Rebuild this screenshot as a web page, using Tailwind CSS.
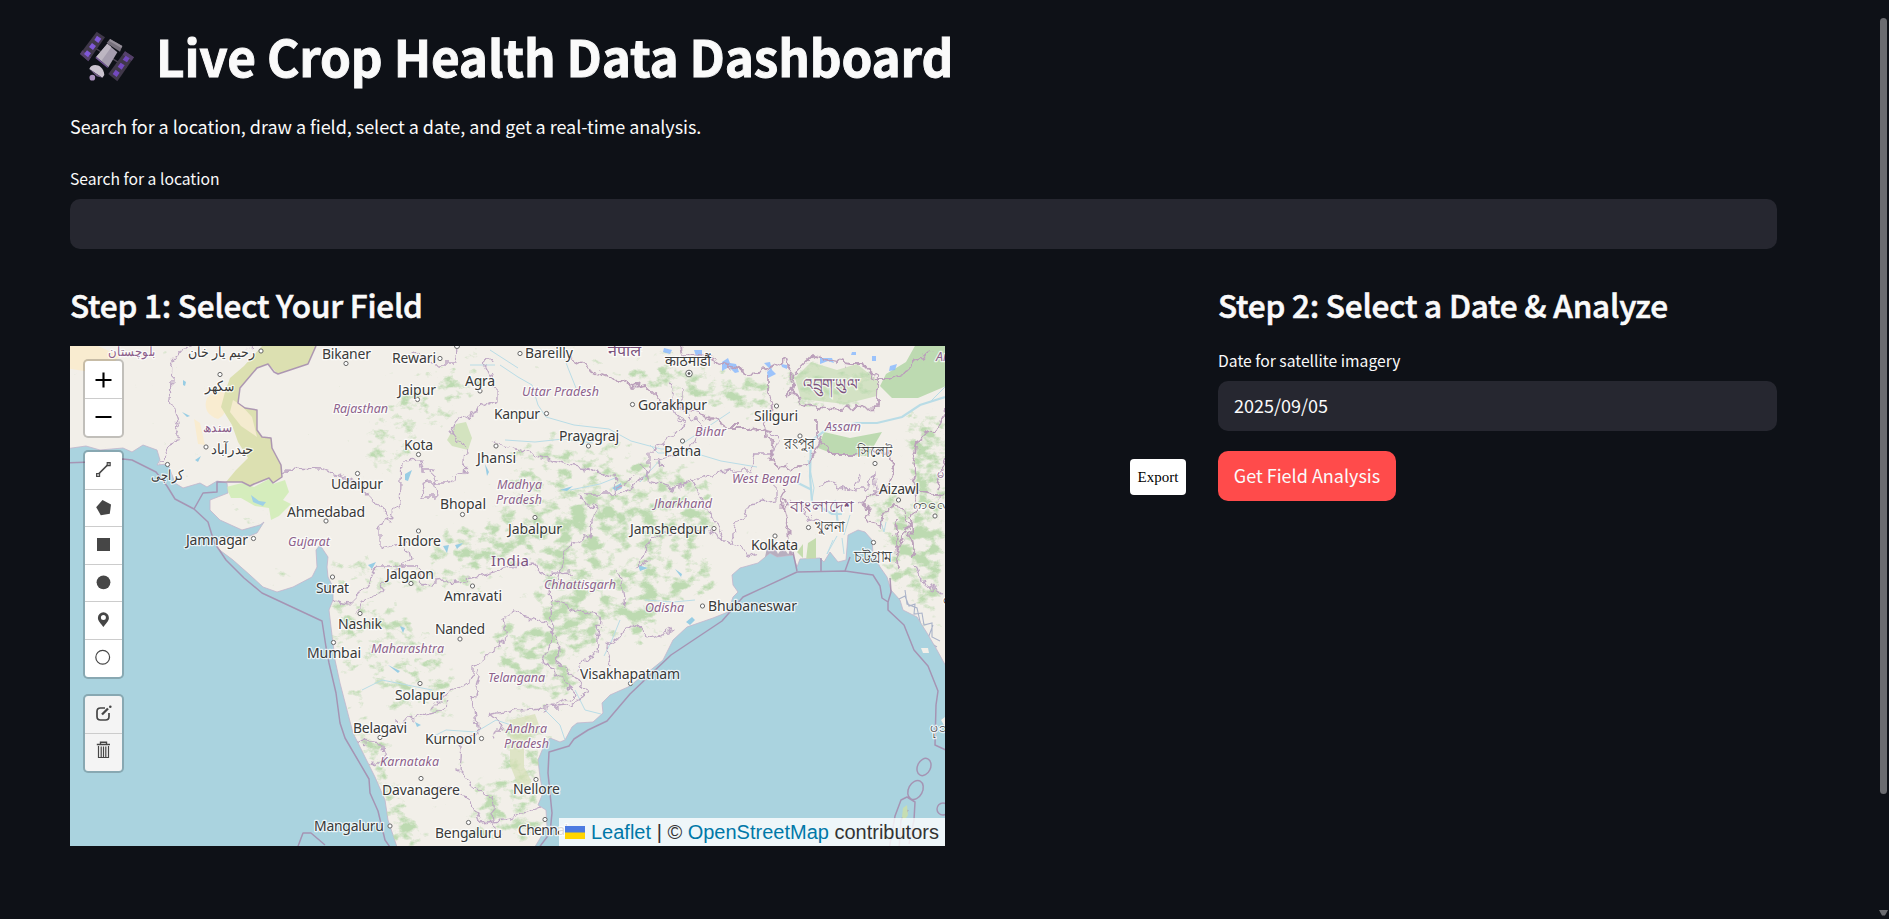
<!DOCTYPE html>
<html lang="en">
<head>
<meta charset="utf-8">
<title>Live Crop Health Data Dashboard</title>
<script src="https://cdn.jsdelivr.net/npm/@tailwindcss/browser@4"></script>
</head>
<body class="h-[919px] overflow-hidden bg-[#0e1117] font-['Noto_Sans_CJK_SC','Noto_Sans',sans-serif] text-[#fafafa]">
<main class="relative h-[919px] pl-[70px] pr-[112px] pt-[20px]">
  <h1 class="flex h-[70px] items-center whitespace-nowrap text-[49.5px] leading-[70px] font-bold">
    <svg class="mt-[2px] mr-[19px] ml-[8px] h-[55px] w-[59px] shrink-0" viewBox="54 30 177 165">
      <path d="M85 75L200 145" stroke="#4b4552" stroke-width="4"/>
      <path d="M110 38l25 17-50 72-25-22z" fill="#40384a"/><path d="M195 97l27 18-50 72-27-22z" fill="#40384a"/>
      <path d="M60 105l25 22 8-12-26-21zM195 97l27 18-7 10-27-18z" fill="#54406a"/>
      <g fill="#8058d8"><path d="M111 50l13 9-9 13-12-9zM96 72l12 9-9 12-12-9zM81 94l12 9-9 12-12-10z"/><path d="M197 110l12 8-8 12-13-8zM182 131l12 8-9 13-12-9zM167 152l12 9-9 13-12-9z" fill="#7349be"/></g>
      <path d="M142 74l30 26-27 45-36-32z" fill="#a59dae"/><path d="M142 74l12 10-30 42-15-13z" fill="#bdb6c2"/>
      <path d="M150 60l37 21-7 17-40-26z" fill="#77717c"/><path d="M150 60l37 21-3 6-36-21z" fill="#96909a"/>
      <path d="M109 113l36 32-3 1-36-29z" fill="#765899"/>
      <path d="M88 150c5-19 42-18 45 18l-6 8z" fill="#cbc4cf"/><path d="M88 150l39 26-17-4z" fill="#75608a"/>
      <circle cx="97" cy="176" r="8.5" fill="#aa91be"/>
    </svg>
    <span class="pt-[2px] tracking-[-0.17px] [-webkit-text-stroke:0.9px_#fafafa]">Live Crop Health Data Dashboard</span>
  </h1>
  <p class="mt-[21px] h-[30px] whitespace-nowrap text-[18px] leading-[30px] tracking-[-0.04px]">Search for a location, draw a field, select a date, and get a real-time analysis.</p>
  <label class="mt-[25px] block h-[26px] text-[15.7px] leading-[26px]">Search for a location</label>
  <div class="mt-[7px] h-[50px] rounded-[10px] bg-[#262730]"></div>

  <div class="mt-[34px] grid grid-cols-[1118px_559px] gap-x-[30px]">
    <section class="relative">
      <h2 class="h-[42px] whitespace-nowrap text-[31.5px] leading-[42px] font-medium tracking-[-0.2px] [-webkit-text-stroke:0.6px_#fafafa]">Step 1: Select Your Field</h2>
      <div class="relative mt-[21px] h-[500px] w-[875px] overflow-hidden bg-[#aad3df]">
        <svg class="block h-[500px] w-[875px]" viewBox="70 346 875 500">
          <defs>
            <clipPath id="land"><path id="coast" d="M65 340V449L86 446 100 450 123 448 132 452 143 445 157 450 160 460 157 465 168 464 175 483 183 488 200 483 207 487 217 481 227 483 228 493 210 500 210 510 220 520 242 530 260 525 264 522 257 533 247 537 225 537 216 541 217 548 233 560 250 575 263 587 277 592 293 587 312 577 317 567 316 550 320 545 328 557 327 567 328 577 333 587 333 600 329 610 331 627 333 643 335 660 340 683 347 710 353 733 363 753 375 777 385 800 388 820 398 850 533 850 547 827 546 810 538 805 543 793 540 777 538 760 543 748 550 738 560 742 565 740 572 727 577 723 593 722 603 713 602 703 610 695 628 687 647 673 663 660 673 640 687 627 713 618 728 612 733 597 738 592 733 585 732 575 740 568 758 563 770 553 777 557 793 555 797 567 800 559 820 558 824 562 830 552 838 562 846 560 848 535 858 530 865 532 872 540 873 553 880 567 887 577 891 590 900 600 903 610 917 617 927 633 937 650 948 670V340Z"/></clipPath>
            <filter id="wood" x="60" y="336" width="895" height="520" filterUnits="userSpaceOnUse" color-interpolation-filters="sRGB">
              <feGaussianBlur in="SourceAlpha" stdDeviation="7" result="area"/>
              <feTurbulence type="fractalNoise" baseFrequency=".07 .1" numOctaves="5" seed="8"/>
              <feColorMatrix values="0 0 0 0 .5 0 0 0 0 .5 0 0 0 0 .5 1 0 0 0 0" result="noise"/>
              <feComposite in="area" in2="noise" operator="arithmetic" k2=".4" k3=".9"/>
              <feComponentTransfer result="mask"><feFuncA type="linear" slope="5" intercept="-3.7"/></feComponentTransfer>
              <feFlood flood-color="#bddab1"/><feComposite in2="mask" operator="in"/>
            </filter>
            <filter id="rough" x="60" y="336" width="895" height="520" filterUnits="userSpaceOnUse" color-interpolation-filters="sRGB">
              <feTurbulence type="fractalNoise" baseFrequency=".09" numOctaves="3" seed="3"/>
              <feDisplacementMap in="SourceGraphic" scale="13" xChannelSelector="R" yChannelSelector="G"/>
            </filter>
          </defs>
          <use href="#coast" fill="#f2efe9" stroke="#c3b5cc" stroke-width=".8"/>
          <g clip-path="url(#land)">
            <path d="M65 346h33l22 10-17 18-38-6z" fill="#f9ecd0"/>
            <path d="M207 398c8-8 16-9 20-3 1 12-1 20-9 24-10-3-15-11-11-21zM194 419l6 4 5 22-7-1z" fill="#f9ecd0"/>
            <path d="M262 346H316L308 364 296 368 278 374 268 364 257 368 240 388 238 403 245 408 257 410 257 430 262 437 271 438 272 448 281 465 282 477 273 483 269 478 254 484 250 486 242 482 226 482 236 470 248 458 238 442 232 425 221 407 225 392 230 378 244 366z" fill="#dce0b1"/>
            <path d="M233 400l8 5 11 12 5 20-16-11-11-14z" fill="#f4ebcf"/>
            <path d="M226 487l16-4 12 4 15-8 4 5 12-4 4 12-6 8 8 4-12 12-8 4-2-12-14-2-14-8-10 0z" fill="#d5edbc"/>
            <path d="M251 495l8 6 7 1-3 4-10-4z" fill="#9ed0e6"/>
            <path d="M880 386l6-12 20-12 10-18h30v42l-28 12-26 0z" fill="#bddab1"/>
            <path d="M824 432l26 6 32-6-14 24-34-2-16-6z" fill="#bddab1"/>
            <path d="M795 378l16-16 26 8 20-6 10 8 12 10-2 14-32 8-44-5z" fill="#d3e2c4"/>
            <path d="M808 543l8-5v22h-10zM797 552l6-8v14z" fill="#c5dcae"/>
            <path d="M447 440l9-16 10-2 6 16-4 12-16-4z" fill="#d3e3bf"/>
            <g filter="url(#wood)">
              <path fill-opacity=".95" d="M570 346l60 26 70 18 60-2 10 18-20 8-100-24-70-32z"/>
              <path fill-opacity=".75" d="M640 350l130 30 0 28-60-4-70-30zM765 378l40-15 75 12-5 30-80 2z"/>
              <path fill-opacity=".8" d="M582 497l60-4 45-12 20 22 10 30-25 14 30 30-10 20-30 10-45 10-20 20-30 20-25-14-30-30 5-40 20-50z"/>
              <path fill-opacity="1" d="M550 590l25-5 20 50-25 15-30-20zM630 590l30 5 0 40-25 10-12-25zM580 495l55 0 0 18-50 2zM632 460l20 5-5 15-14-1zM545 640l25 10 6 32-20-6z"/>
              <path fill-opacity=".7" d="M515 440l80-5 90 30 30 20-20 50-60-10-120 10-50 20-40 10 5-35 60-15zM365 405l100-50 20-5-5 40-60 60-40 30-20-15z"/>
              <path fill-opacity=".85" d="M460 540l80-32 80-10-35 60-80 10-60-6zM497 620l60 10 25 55-20 25-50-25-30-40z"/>
              <path fill-opacity=".7" d="M330 560l60 0 110 10-5 20-50 4-110-4zM260 570h30v15h-30zM225 505l40 5-10 14-25-4zM335 600h60l60 60 0 60-70-10z"/>
              <path fill-opacity="1" d="M329 600l14 0 12 70 10 50 20 40 20 50 20 36h-30l-18-60-18-55-17-65z"/>
              <path fill-opacity=".8" d="M357 740l28-5 15 60 40 50h-40l-25-55zM505 715l30-15 10 40-5 105h-80l15-60 30-30z"/>
              <path fill-opacity="1" d="M903 420l32-10 12 15v140l-20 20-15-30 12-45-14-20zM885 540l15-30 22-5 5 40-12 40-15-5z"/>
              <path fill-opacity=".85" d="M860 500l15-10 25 0 10 60-18 20-20-50zM880 570l30-2 30 20 2 40-30-20zM890 440l40-10-20 30z"/>
            </g>
            <path d="M510 720l25-6 5 14-16 14 0 25 8 15-12 8-10-25z" fill="#d5dfb6" opacity=".7"/>
            <g fill="none" stroke="#b9dce6" stroke-width="1">
              <path d="M500 365l18 12 14 8 6 20 8 12 28 8 35 4 22 12 30 8 20 0 40 12 36 6M560 346l8 22 8 20M730 412l-18 12-30 20M650 445l8 8 10 0M505 440l30 2 28-3 30 4M640 482l20-22M570 490l30-6 15-6M426 740l20-10 30 2 20-12 24 8M545 710l15 15 5 15M575 690l10 20 16 4M645 600l28 2 22-2M620 620l-8 20-8 16M362 690l20-10 50 10M280 600l10-10M495 365h-25M490 350l28 18"/>
              <path stroke-width="2.2" d="M945 397l-25 8-18 12-25 6-20 0-30 6-16 12-1 35 2 26 20 12 10 0M835 500l3 25M812 490l-16-8"/>
              <path d="M808 460l6 28-2 12M945 387l-15 15M850 515l-6 20M880 520l4 12 2-10M837 536l-10 18 6-14M842 538l2 16"/>
            </g>
            <g fill="#98cde4"><path d="M183 380l3 2-1 4-2-1zM182 412l8 4-3 1zM195 460l6-4-3 6zM405 474l7-4-4 11-3-1zM485 464l4 8-2 4zM560 490l13-4-6 5zM612 488l9-5 1 5-6 3zM443 546l6-1-2 8zM368 565l8-3-4 7zM400 626l5 2-2 5zM638 565l10 3-8 3zM675 569l7 5-1 3zM686 622l6-5 3 3-5 5zM388 665l12 6-2 2zM415 722l6 3-4 2zM455 545l8-2-6 6z"/></g>
            <g fill="#86b8ff" opacity=".8"><path d="M664 348l8 2-2 4-7-2zM694 350h8v6h-6zM722 362l6-4 2 5 6 1 3 8-4 1-6-6-7 4zM764 363l6-1 2 8 4 4-8 4-1-6 3-3zM781 364l6 1v4l-5-2zM820 358l12 0 2 5-6-2-8 3zM890 366l7-2-2 6-6 1zM852 352h4v3h-5zM872 356h4v5h-4z"/></g>
            <path d="M765 557l3-14 3 8 3-6 4 9 5-7 5 7 4-3 3 16-4-7-3 5-4-6-4 6-5-7-4 5z" fill="#b8aebf"/>
            <g fill="none" stroke="#aab3c9" stroke-width="1.1"><path d="M897 600l8-4 4 10 6-2-1 10 8-1 2 12 8-2 0 14 8 4M905 590l2 14 10 4 4 18M933 625l-6 16 10 6"/></g>
          </g>
          <g fill="none" stroke="#bea7c4" stroke-width="1.3" filter="url(#rough)" clip-path="url(#land)">
            <path d="M160 465l14-24 5-15-8-25 2-40 8-10 20-8 26-12 10 0 16 18M284 470l40 1 35 12 20 24 10 12-10 10 0 20 28-6 4 16-20 16-12 18-14 6-8 16M386 520l14-14 2-46 18-1 2 12 12 0 4 26-18 0 8-16 20 0 16-8 2-22-14-20 4-10 40-20 0-14-12-24 8-4M490 440l25 10 50 12 50 14 2 18 20-8 12-18 0-16 18-14 16-12 0 0-14-20 4-22M410 350l26 14 20 0 2-16M580 497l16 12-6 26-26 14-6 36M585 493l28 0 22-20M655 460l10 4-5-4 30-12 14-22-20-14 0-24M640 465l14 18 20 5 40-14 22-4 14 0 4-16 18 0 6-12-12-12M650 560l-12 8 12-28 18-8 22-6 16 4 26 14 4-20 14-20 26-4 0-18M690 480l16 26 12 22 10 16 30 12M330 600l20 4 16-16 10-22 40 0 6 18 50-6 60-16 10 12 30-2M430 710l14-14 30-20 0-10 32-28-4-20 12-4 28 6 20 26-6 14 20 18 12 16-20 12-50 4-30 6M446 703l-8 10-24 6-26 8M358 742l26 2 2 18-14 2M480 670l-6 30 4 34-18 10-2 28 14 14 20 12 4 30M495 740l6-16-12-10M550 585l2 46-10 30 20 20 12 16-30 14M553 600l48 20-4 30-18 18M610 665l-4-18 30-24 14 16 24-10M800 500l10 20 16 2M858 475l-4 16-26-8-12 2M855 490l12 0 8-16 2 16-16 12M916 565l6 20 22 8M436 784l34 14 10 25 30-4 30-12M620 573l4 36"/>
            <path stroke="#bba0bb" stroke-width="1.8" d="M570 358l26 14 20 8 16 8 14-2 18 18 20 4 12 4 16 8 16 6 20 0 10 4 14 2M682 346l2 8 26 2 12 8 28 8 16-2 18-10 8 12-2 22M768 374l0 20 6 20-10 10 2 14 8 8-4 12 10 12 20-4 8-2 10-18 4-10M788 396l8-24 16-16 16 4 20 4 16 0 10 16 16 0 20-10 6-10 16-8M790 395l20 10 28 4 40-2 0-30-12-10M817 418l0 20 14 16 24 0 14-4 20 4 4 24-10 12-18 8 4 26 12 4 2-10 10-14 10 2 10 36 0 16M945 410l-10 20-16 8-4 24-4 30 30 4M898 550l14-30 4-10-2-20M784 494l4 12-6 4 6 20 4 30M945 460l-8 30M784 490l-2 20M895 520l4 50"/>
          </g>
          <g fill="none" stroke="#a58cae" stroke-width="1.5" stroke-linejoin="round" opacity=".88">
            <path d="M316 346L308 364 296 368 278 374 274 372 268 364 257 368 240 388 238 403 245 408 257 410 257 430 262 437 271 438 272 448 281 465 282 477 273 483 269 478 254 484 250 486 242 482 217 482 217 492 203 493 194 509 175 499 167 486 156 472 132 460 123 459 92 462 65 463M194 509L208 522 214 542 226 560 244 578 262 593 322 621 326 647 329 663 336 693 340 723 345 738 369 779 370 793 378 811 385 840 392 850"/>
            <path d="M297 849l6-16 8 0 14 12M538 849L550 833 552 813 548 773 549 752 569 746 574 739 588 730 607 721 630 694 671 655 722 621 743 597 797 572 845 571 873 575 880 586 882 598 888 602 888 610 904 625 914 650 928 666 938 691 936 705 935 745 948 751"/>
            <path d="M797 571l-4-19M821 571v-13M845 571l5-14M888 602l3-10-1-14"/>
            <ellipse cx="924" cy="767" rx="6.5" ry="9" transform="rotate(25 924 767)"/><ellipse cx="915.500" cy="790" rx="7" ry="10" transform="rotate(28 915.500 790)"/><circle cx="943" cy="809" r="6"/>
            <path d="M889 850l6-34 6-16 6-3 8 5-1 18-5 24M899 850l2-30 7-10"/>
          </g>
          <path d="M903 808l4-3 1 10-4 6-2-4z" fill="#c6ddb2"/><path d="M921 648l7 0 1 5-6 0zM941 720l4-3v10z" fill="#f2efe9"/>
          <g fill="#fff" stroke="#676767" stroke-width="1">
            <circle cx="261" cy="351" r="2.100"/><circle cx="220" cy="374.500" r="2.100"/><circle cx="206" cy="447" r="2.100"/><circle cx="167.500" cy="464.500" r="2.100"/><circle cx="346" cy="363.500" r="2.100"/><circle cx="440" cy="358.500" r="2.100"/><circle cx="417.500" cy="399.500" r="2.100"/><circle cx="480" cy="391" r="2.100"/><circle cx="457" cy="346" r="2.500"/><circle cx="418.500" cy="454.500" r="2.100"/><circle cx="357.500" cy="473.500" r="2.100"/><circle cx="496" cy="446" r="2.100"/><circle cx="326" cy="521" r="2.100"/><circle cx="462.500" cy="514.500" r="2.100"/><circle cx="418.500" cy="531" r="2.100"/><circle cx="253.500" cy="538.500" r="2.100"/><circle cx="520" cy="353.500" r="2.100"/><circle cx="546.500" cy="413.500" r="2.100"/><circle cx="632.500" cy="404.500" r="2.100"/><circle cx="588.500" cy="446" r="2.100"/><circle cx="682.500" cy="441" r="2.100"/><circle cx="776.500" cy="406" r="2.100"/><circle cx="800" cy="436" r="2.100"/><circle cx="875" cy="463.500" r="2.100"/><circle cx="714" cy="528.500" r="2.100"/><circle cx="535" cy="517.500" r="2.100"/><circle cx="775" cy="536" r="2.100"/><circle cx="808.500" cy="527.500" r="2.100"/><circle cx="898.500" cy="500" r="2.100"/><circle cx="935" cy="516" r="2.100"/><circle cx="873.500" cy="542.500" r="2.100"/><circle cx="332.500" cy="577" r="2.100"/><circle cx="411" cy="583.500" r="2.100"/><circle cx="472.500" cy="586" r="2.100"/><circle cx="360" cy="613.500" r="2.100"/><circle cx="333.500" cy="642.500" r="2.100"/><circle cx="460" cy="639" r="2.100"/><circle cx="420" cy="683.500" r="2.100"/><circle cx="380" cy="737.500" r="2.100"/><circle cx="481.500" cy="738.500" r="2.100"/><circle cx="421" cy="778.500" r="2.100"/><circle cx="390" cy="826" r="2.100"/><circle cx="468.500" cy="822.500" r="2.100"/><circle cx="702.500" cy="606" r="2.100"/><circle cx="630.500" cy="683.500" r="2.100"/><circle cx="536" cy="779.500" r="2.100"/><circle cx="545" cy="819.500" r="2.100"/>
            <circle cx="689" cy="373.500" r="3.300"/><circle cx="689" cy="373.500" r="1" fill="#333"/>
          </g>
          <g font-family="Noto Sans, sans-serif" font-size="14" fill="#3a3a3a" stroke="#fff" stroke-opacity=".75" stroke-width="2.500" paint-order="stroke" stroke-linejoin="round">
            <text x="322" y="359" textLength="49">Bikaner</text><text x="392" y="363" textLength="44">Rewari</text><text x="398" y="395" textLength="38">Jaipur</text><text x="465" y="386" textLength="30">Agra</text><text x="494" y="419" textLength="46">Kanpur</text><text x="404" y="450" textLength="29">Kota</text><text x="477" y="463" textLength="39">Jhansi</text><text x="331" y="489" textLength="52">Udaipur</text><text x="287" y="517" textLength="78">Ahmedabad</text><text x="440" y="509" textLength="46">Bhopal</text><text x="186" y="545" textLength="62">Jamnagar</text><text x="398" y="546" textLength="43">Indore</text><text x="525" y="358" textLength="48">Bareilly</text><text x="638" y="410" textLength="69">Gorakhpur</text><text x="559" y="441" textLength="60">Prayagraj</text><text x="664" y="456" textLength="37">Patna</text><text x="754" y="421" textLength="44">Siliguri</text><text x="508" y="534" textLength="54">Jabalpur</text><text x="630" y="534" textLength="78">Jamshedpur</text><text x="751" y="550" textLength="47">Kolkata</text><text x="879" y="494" textLength="40">Aizawl</text>
            <text x="386" y="579" textLength="48">Jalgaon</text><text x="316" y="593" textLength="33">Surat</text><text x="444" y="601" textLength="58">Amravati</text><text x="338" y="629" textLength="44">Nashik</text><text x="435" y="634" textLength="50">Nanded</text><text x="307" y="658" textLength="54">Mumbai</text><text x="395" y="700" textLength="50">Solapur</text><text x="353" y="733" textLength="54">Belagavi</text><text x="425" y="744" textLength="51">Kurnool</text><text x="382" y="795" textLength="78">Davanagere</text><text x="314" y="831" textLength="70">Mangaluru</text><text x="435" y="838" textLength="67">Bengaluru</text><text x="708" y="611" textLength="89">Bhubaneswar</text><text x="580" y="679" textLength="100">Visakhapatnam</text><text x="513" y="794" textLength="47">Nellore</text><text x="518" y="835" textLength="50">Chennai</text>
            <text x="188" y="357" textLength="67" lengthAdjust="spacingAndGlyphs">رحیم یار خان</text><text x="205" y="391" textLength="30" lengthAdjust="spacingAndGlyphs">سکھر</text><text x="211" y="454" textLength="43" lengthAdjust="spacingAndGlyphs">حیدرآباد</text><text x="151" y="480" textLength="33" lengthAdjust="spacingAndGlyphs">کراچی</text>
            <text x="665" y="366" textLength="46" lengthAdjust="spacingAndGlyphs" font-size="14">काठमाडौं</text><text x="784" y="449" textLength="31" lengthAdjust="spacingAndGlyphs" font-size="15">রংপুর</text><text x="857" y="457" textLength="35" lengthAdjust="spacingAndGlyphs" font-size="15">সিলেট</text><text x="815" y="532" textLength="30" lengthAdjust="spacingAndGlyphs" font-size="15">খুলনা</text><text x="854" y="562" textLength="38" lengthAdjust="spacingAndGlyphs" font-size="15">চট্টগ্রাম</text><text x="913" y="509" textLength="42" lengthAdjust="spacingAndGlyphs">ကလေး</text><text x="930" y="732">ပုသိမ်</text><text x="943" y="604">မ</text>
          </g>
          <g font-family="Noto Sans, sans-serif" font-size="12.500" font-style="italic" fill="#8d618b" stroke="#fff" stroke-opacity=".7" stroke-width="2.500" paint-order="stroke" stroke-linejoin="round">
            <text x="333" y="413" textLength="55">Rajasthan</text><text x="288" y="546" textLength="42">Gujarat</text><text x="522" y="396" textLength="77">Uttar Pradesh</text><text x="695" y="436" textLength="31">Bihar</text><text x="825" y="431" textLength="36">Assam</text><text x="497" y="489" textLength="45">Madhya</text><text x="496" y="504" textLength="46">Pradesh</text><text x="654" y="508" textLength="58">Jharkhand</text><text x="732" y="483" textLength="68">West Bengal</text><text x="371" y="653" textLength="73">Maharashtra</text><text x="488" y="682" textLength="57">Telangana</text><text x="544" y="589" textLength="72">Chhattisgarh</text><text x="645" y="612" textLength="39">Odisha</text><text x="506" y="733" textLength="41">Andhra</text><text x="504" y="748" textLength="45">Pradesh</text><text x="380" y="766" textLength="59">Karnataka</text><text x="936" y="361">Arunachal</text>
            <g font-style="normal"><text x="108" y="356" textLength="48" lengthAdjust="spacingAndGlyphs">بلوچستان</text><text x="203" y="432" textLength="29" lengthAdjust="spacingAndGlyphs">سندھ</text><text x="937" y="478">မ</text></g>
          </g>
          <g font-family="Noto Sans, sans-serif" font-size="15" fill="#7b527d" stroke="#fff" stroke-opacity=".7" stroke-width="2.500" paint-order="stroke">
            <text x="491" y="566" textLength="38">India</text><text x="608" y="356" textLength="33" lengthAdjust="spacingAndGlyphs" font-size="14">नेपाल</text><text x="790" y="512" textLength="63" lengthAdjust="spacingAndGlyphs" font-size="16">বাংলাদেশ</text><text x="803" y="390" textLength="57" lengthAdjust="spacingAndGlyphs" font-size="16">འབྲུག་ཡུལ་</text>
          </g>
        </svg>

        <!-- map controls -->
        <div class="absolute top-[13px] left-[13px] flex w-[41px] flex-col gap-[12px]">
          <div class="flex h-[79px] flex-col rounded-[5px] border-2 border-black/20 bg-white bg-clip-padding text-black">
            <div class="flex h-[38px] items-center justify-center border-b border-[#ccc] pt-[1px]"><svg class="h-[16px] w-[17px]" viewBox="0 0 17 16"><path d="M.5 8h16M8.500.5v15" stroke="currentColor" stroke-width="2.100"/></svg></div>
            <div class="flex h-[37px] items-center justify-center pb-[1px]"><svg class="h-[16px] w-[17px]" viewBox="0 0 17 16"><path d="M.5 8h16" stroke="currentColor" stroke-width="2"/></svg></div>
          </div>
          <div class="flex h-[229px] flex-col rounded-[5px] border-2 border-black/20 bg-white bg-clip-padding text-[#464646]">
            <div class="h-[38px] border-b border-[#ccc]"><svg viewBox="85 452 37 37" class="h-[37px] w-[37px]" fill="none" stroke="currentColor"><path d="M98.500 474l9.500-9.500" stroke-width="1.700"/><path d="M96.600 473.500h3v3h-3zM107.200 462.600h3v3h-3z" fill="#bbb" stroke-width="1.100"/></svg></div>
            <div class="h-[37px] border-b border-[#ccc]"><svg viewBox="85 490 37 36" class="h-[36px] w-[37px]" fill="currentColor"><path d="M102.500 500l8.500 4.500-1.200 9.300-9 1.400-4.600-8z"/></svg></div>
            <div class="h-[38px] border-b border-[#ccc]"><svg viewBox="85 527 37 37" class="h-[37px] w-[37px]" fill="currentColor"><path d="M97 538h13v13H97z"/></svg></div>
            <div class="h-[37px] border-b border-[#ccc]"><svg viewBox="85 565 37 36" class="h-[36px] w-[37px]" fill="currentColor"><circle cx="103.500" cy="582.300" r="6.900"/></svg></div>
            <div class="h-[38px] border-b border-[#ccc]"><svg viewBox="85 602 37 37" class="h-[37px] w-[37px]" fill="currentColor"><path fill-rule="evenodd" d="M103.400 612.300a5.500 5.500 0 0 1 5.500 5.600c0 3-3.500 6.100-5.500 9.100-2-3-5.500-6.100-5.500-9.100a5.500 5.500 0 0 1 5.500-5.600zm0 2.600a2.500 2.500 0 1 0 0 5 2.500 2.500 0 0 0 0-5z"/></svg></div>
            <div class="h-[37px]"><svg viewBox="85 640 37 37" class="h-[37px] w-[37px]" fill="none" stroke="currentColor"><circle cx="102.700" cy="657.300" r="6.900" stroke-width="1.200"/></svg></div>
          </div>
          <div class="mt-[3px] flex h-[79px] flex-col rounded-[5px] border-2 border-black/20 bg-[#f4f4f4] bg-clip-padding text-[#464646]">
            <div class="h-[38px] border-b border-[#ccc]"><svg viewBox="85 696 37 37" class="h-[37px] w-[37px]" fill="none" stroke="currentColor"><path d="M105 708h-4.500q-3.500 0-3.500 3.500v5q0 3.500 3.500 3.500h5q3.500 0 3.500-3.500V713" stroke-width="1.700"/><path d="M102 714.500l6-6" stroke-width="2.300"/><circle cx="110.300" cy="706.700" r="1.300" fill="currentColor" stroke="none"/></svg></div>
            <div class="h-[37px]"><svg viewBox="85 734 37 37" class="h-[37px] w-[37px]" fill="none" stroke="currentColor"><path d="M96.800 744.500h13.200M100.500 744v-1.800h6v1.800" stroke-width="1.400"/><path d="M98.500 746v11.500h10V746M101.200 746.500V757M103.500 746.500V757M105.800 746.500V757" stroke-width="1.200"/></svg></div>
          </div>
        </div>

        <div class="absolute right-0 bottom-0 flex h-[28px] w-[386px] items-center bg-white/80 pl-[6px] font-['Liberation_Sans',sans-serif] text-[20px] leading-[28px] whitespace-nowrap text-[#333]">
          <svg class="mr-[6px] h-[13px] w-[20px]" viewBox="0 0 20 13"><path d="M0 0h20v7H0z" fill="#4c7be1"/><path d="M0 6.500h20V13H0z" fill="#ffd500"/></svg>
          <span><span class="text-[#0078a8]">Leaflet</span> <span>|</span> © <span class="text-[#0078a8]">OpenStreetMap</span> contributors</span>
        </div>
      </div>
      <button class="absolute top-[176px] right-[2px] h-[36px] w-[56px] rounded-[4px] bg-white font-['Liberation_Serif',serif] text-[15px] leading-[36px] font-normal text-black">Export</button>
    </section>

    <section>
      <h2 class="h-[42px] whitespace-nowrap text-[31.5px] leading-[42px] font-medium tracking-[-0.2px] [-webkit-text-stroke:0.6px_#fafafa]">Step 2: Select a Date &amp; Analyze</h2>
      <label class="mt-[23px] block h-[26px] text-[15.7px] leading-[26px]">Date for satellite imagery</label>
      <div class="mt-[7px] h-[50px] rounded-[10px] bg-[#262730] px-[16px] text-[18px] leading-[48px]">2025/09/05</div>
      <button class="mt-[20px] block h-[50px] w-[178px] rounded-[10px] bg-[#ff4b4b] pb-[2px] text-[18px] leading-[48px] whitespace-nowrap">Get Field Analysis</button>
    </section>
  </div>

  <div class="absolute top-[18px] right-[2px] h-[776px] w-[7px] rounded-full bg-[#6b6c70]"></div>
  <svg class="absolute top-[910px] right-[1px] h-[6px] w-[9px]" viewBox="0 0 9 6"><path d="M0 0h9L6 5.500H3z" fill="#6b6c70"/></svg>
</main>
</body>
</html>
